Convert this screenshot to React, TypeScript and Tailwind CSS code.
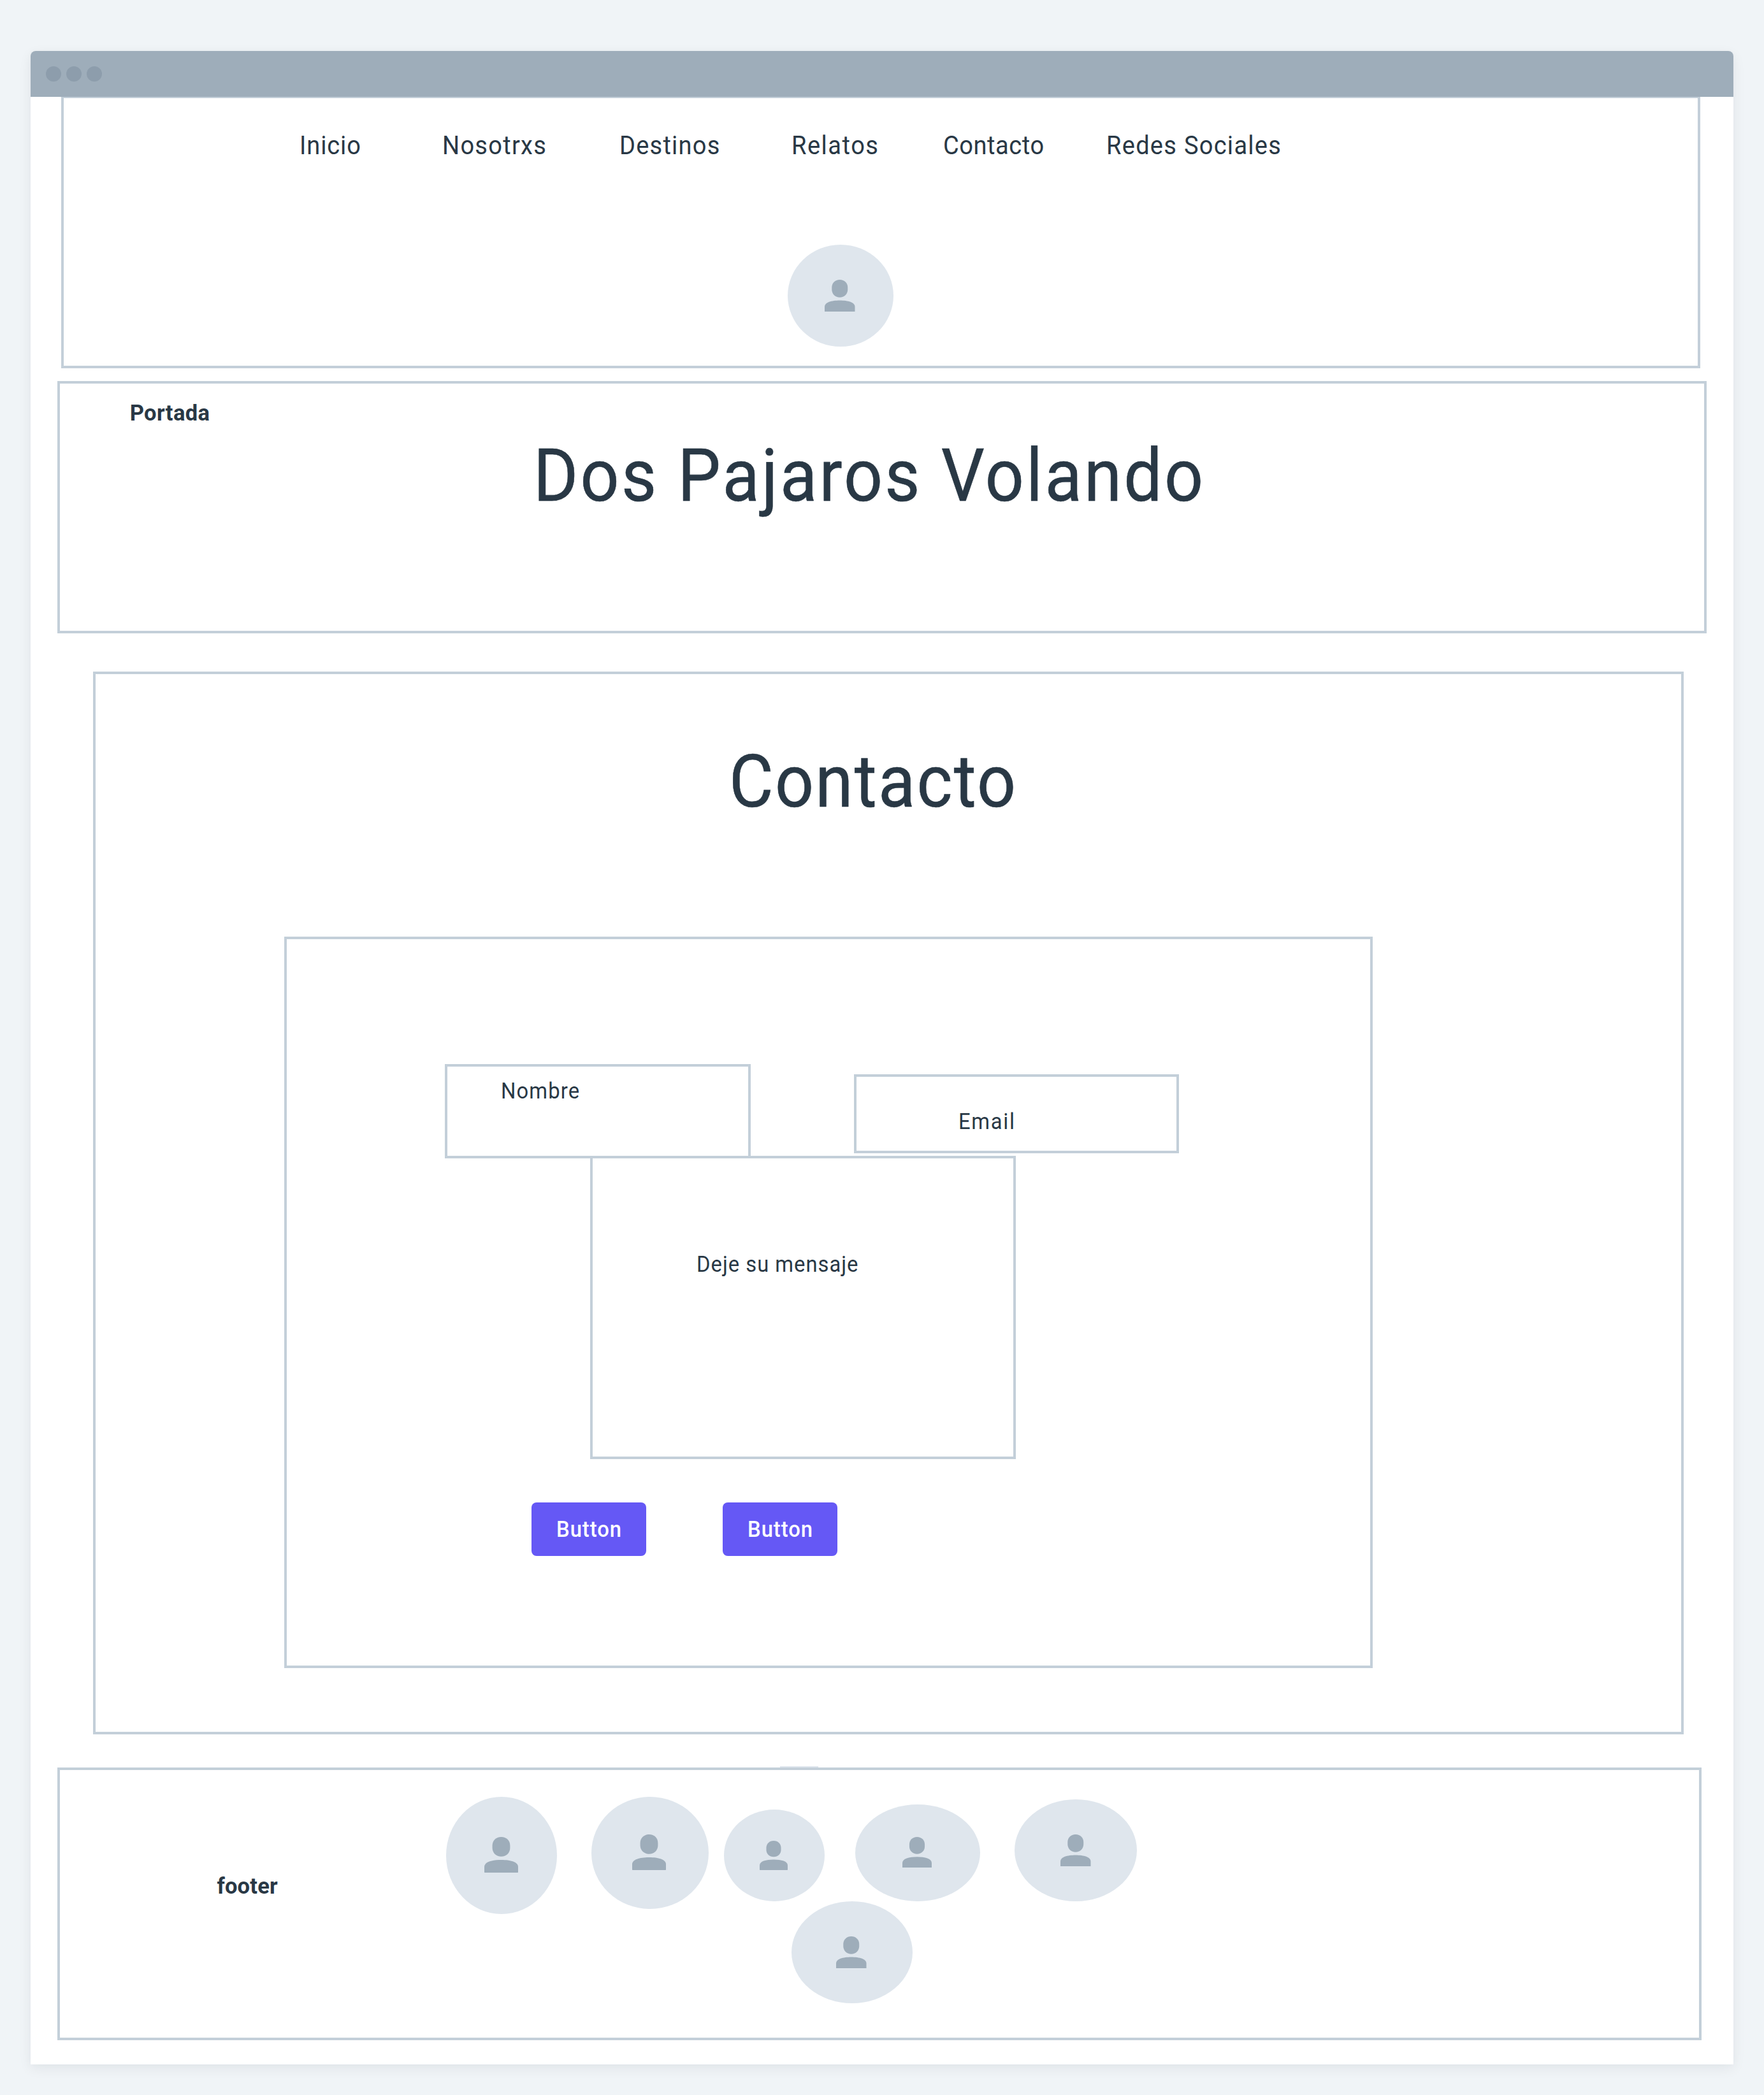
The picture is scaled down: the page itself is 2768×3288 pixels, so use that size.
import type { ReactNode } from "react";

/** Rectangle outline shared by every wireframe section. */
function Box({ className, children }: { className: string; children?: ReactNode }) {
  return <div className={`box-border border-4 border-[#c3cfd9] bg-white ${className}`}>{children}</div>;
}

/** Slightly condensed, open-tracked lettering. */
function Label({ className, children }: { className: string; children: ReactNode }) {
  return <span className={`inline-block origin-left whitespace-nowrap ${className}`}>{children}</span>;
}

/** Elliptical placeholder; `icon` sets the person glyph's size and nudge. */
function Avatar({ className, icon }: { className: string; icon: string }) {
  return (
    <div className={`flex shrink-0 items-center justify-center rounded-[50%] bg-[#dfe6ed] ${className}`}>
      <svg viewBox="0 0 53 56" preserveAspectRatio="none" className={`shrink-0 fill-[#9eadba] ${icon}`}>
        <path d="M26.5 0C34.6 0 40.4 5.8 40.4 13.4V17.3C40.4 25 34.4 30.8 26.5 30.8S12.6 25 12.6 17.3V13.4C12.6 5.8 18.4 0 26.5 0Z" />
        <path d="M26.5 36C41 36 53 39.2 53 47V55.2Q53 56 52.2 56H0.8Q0 56 0 55.2V47C0 39.2 12 36 26.5 36Z" />
      </svg>
    </div>
  );
}

const navItems = [
  { label: "Inicio", width: "w-[224.2px]", tracking: "tracking-[0.95px]" },
  { label: "Nosotrxs", width: "w-[278px]", tracking: "tracking-[1.35px]" },
  { label: "Destinos", width: "w-[270px]", tracking: "tracking-[1.3px]" },
  { label: "Relatos", width: "w-[238px]", tracking: "tracking-[1.6px]" },
  { label: "Contacto", width: "w-[256.2px]", tracking: "tracking-[0.6px]" },
  { label: "Redes Sociales", width: "w-[280px]", tracking: "tracking-[1.35px]" },
];

const footerAvatars = [
  { className: "mt-[42px] h-[184px] w-[174px]", icon: "h-[56px] w-[53px] -translate-y-px" },
  { className: "mt-[42px] ml-[54px] h-[176px] w-[184px]", icon: "h-[56px] w-[53px] -translate-x-px -translate-y-px" },
  { className: "mt-[62px] ml-[24px] h-[144px] w-[158px]", icon: "h-[46px] w-[44px] -translate-x-px" },
  { className: "mt-[54px] ml-[48px] h-[152px] w-[196px]", icon: "h-[48.5px] w-[46px] -translate-x-px -translate-y-px" },
  { className: "mt-[46px] ml-[54px] h-[160px] w-[192px]", icon: "h-[50.5px] w-[47.5px]" },
];

export default function App() {
  return (
    <div className="flex h-[3288px] w-[2768px] flex-col overflow-hidden bg-[#f0f4f7] px-[48px] pt-[80px] font-['Roboto','Liberation_Sans',sans-serif] text-[#293845]">
      <div className="flex h-[3160px] w-[2672px] shrink-0 flex-col rounded-t-[8px] bg-white shadow-[0_6px_20px_rgba(20,30,40,0.07),0_0_10px_rgba(0,0,0,0.015)]">
        {/* Browser title bar */}
        <div className="relative z-10 flex h-[72px] shrink-0 items-center gap-[8px] rounded-t-[8px] bg-[#9eadba] pl-[24px]">
          <span className="size-[24px] rounded-full bg-[#8d9dac]" />
          <span className="size-[24px] rounded-full bg-[#8d9dac]" />
          <span className="size-[24px] rounded-full bg-[#8d9dac]" />
        </div>

        <Box className="-mt-[2px] ml-[48px] h-[428px] w-[2572px] shrink-0 pt-[55px]">
          <nav className="flex h-[40px] pl-[369.7px] text-[40px] leading-[40px]">
            {navItems.map((item) => (
              <a key={item.label} className={`shrink-0 ${item.width}`}>
                <Label className={`scale-x-95 ${item.tracking}`}>{item.label}</Label>
              </a>
            ))}
          </nav>
          <Avatar className="mt-[135px] ml-[1136px] h-[160px] w-[166px]" icon="h-[50.5px] w-[47.5px] -translate-x-px" />
        </Box>

        <Box className="mt-[20px] ml-[42px] h-[396px] w-[2588px] shrink-0 pt-[26px]">
          <p className="pl-[109.7px] text-[34.5px] leading-[40px] font-bold tracking-[0.4px]">Portada</p>
          <h1 className="mt-[19px] flex h-[120px] pl-[743px] text-[115.2px] leading-[120px]">
            <Label className="scale-x-[0.93] tracking-[3.5px] [-webkit-text-stroke:0.6px_#293845]">Dos Pajaros Volando</Label>
          </h1>
        </Box>

        <Box className="mt-[60px] ml-[98px] h-[1668px] w-[2496px] shrink-0 pt-[109px]">
          <h2 className="flex h-[120px] pl-[994.4px] text-[115.2px] leading-[120px]">
            <Label className="scale-x-[0.93] tracking-[2.4px] [-webkit-text-stroke:0.6px_#293845]">Contacto</Label>
          </h2>
          <Box className="mt-[183px] ml-[296px] h-[1148px] w-[1708px] pt-[196px]">
            <div className="flex h-[148px] items-start pl-[248px] text-[34.5px] leading-[40px]">
              <Box className="flex h-[148px] w-[480px] items-start pt-[18px] pl-[84.3px]">
                <Label className="scale-x-95 tracking-[1.2px]">Nombre</Label>
              </Box>
              <Box className="mt-[16px] ml-[162px] flex h-[124px] w-[510px] items-start pt-[50px] pl-[160px]">
                <Label className="scale-x-95 tracking-[1.8px]">Email</Label>
              </Box>
            </div>
            <Box className="-mt-[4px] ml-[476px] flex h-[476px] w-[668px] items-start pt-[146px] pl-[163px] text-[34.5px] leading-[40px]">
              <Label className="scale-x-95 tracking-[1.05px]">Deje su mensaje</Label>
            </Box>
            <div className="mt-[68px] ml-[384px] flex gap-[120px] text-[34.5px] leading-[40px] font-medium text-white">
              <button className="flex h-[84px] w-[180px] items-center rounded-[8px] bg-[#6558f5] pl-[38.7px]">
                <Label className="scale-x-95 tracking-[1px]">Button</Label>
              </button>
              <button className="flex h-[84px] w-[180px] items-center rounded-[8px] bg-[#6558f5] pl-[38.7px]">
                <Label className="scale-x-95 tracking-[1px]">Button</Label>
              </button>
            </div>
          </Box>
        </Box>

        <div className="mt-[50px] ml-[1176px] h-[2px] w-[60px] shrink-0 bg-[#dfe6ed]" />
        <Box className="ml-[42px] h-[428px] w-[2580px] shrink-0">
          <div className="flex h-[206px] items-start">
            <p className="mt-[162px] ml-[246.4px] w-[359.6px] text-[34.5px] leading-[40px] font-bold tracking-[0.2px]">footer</p>
            {footerAvatars.map((avatar, i) => (
              <Avatar key={i} {...avatar} />
            ))}
          </div>
          <Avatar className="ml-[1148px] h-[160px] w-[190px]" icon="h-[50.5px] w-[47.5px] -translate-x-px" />
        </Box>
      </div>
    </div>
  );
}
